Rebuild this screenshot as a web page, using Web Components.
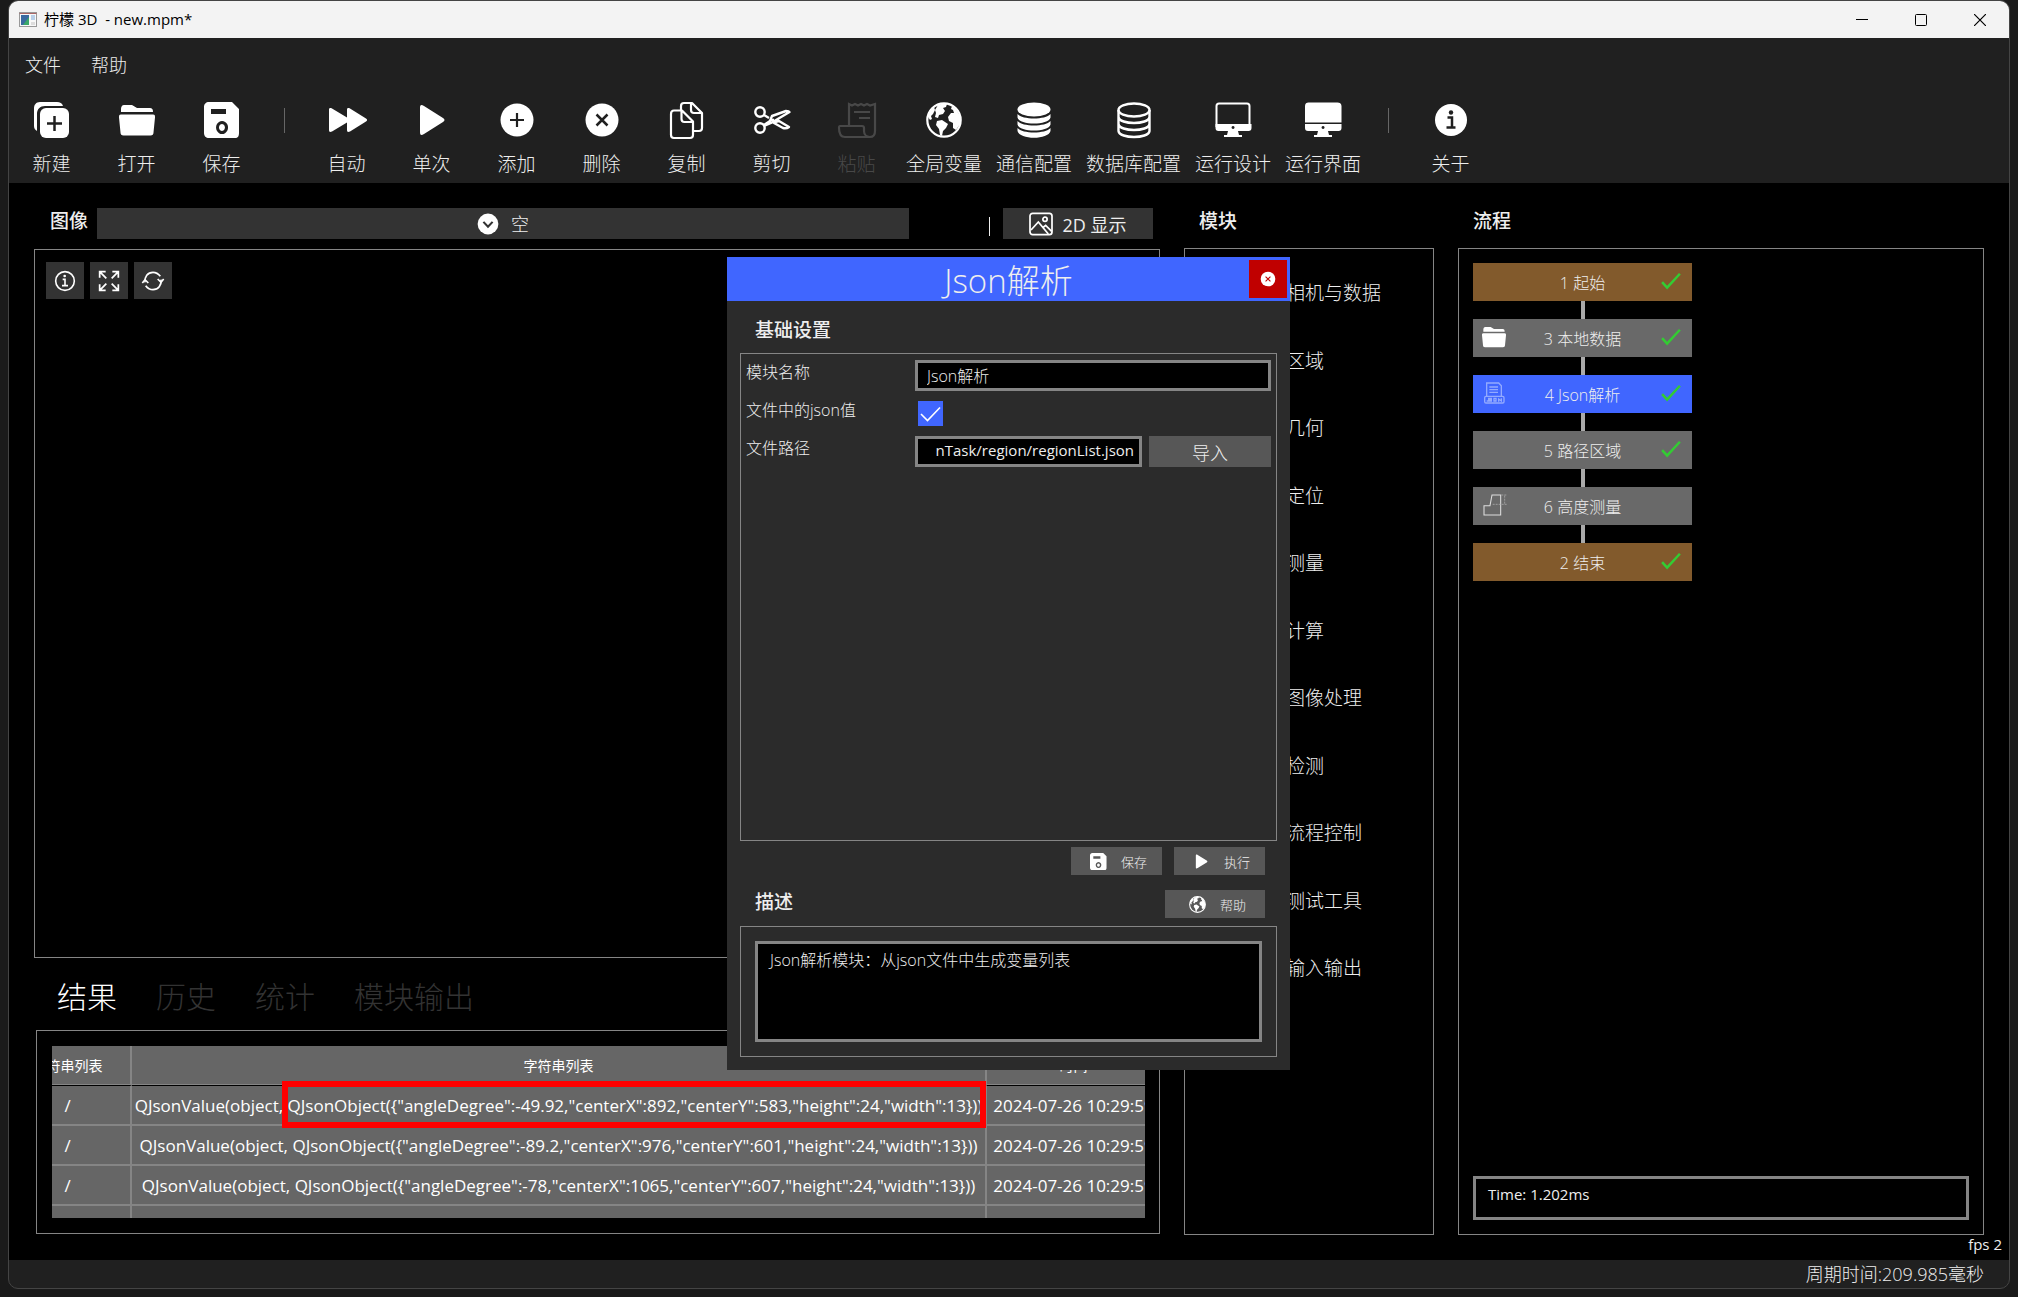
<!DOCTYPE html>
<html lang="zh-CN">
<head>
	<meta charset="utf-8">
	<meta name="viewport" content="width=device-width, initial-scale=1">
	<title>柠檬 3D - new.mpm*</title>
	<style>
		html, body {
			height: 100%;
		}
		body {
			box-sizing: border-box;
			margin: 0;
			padding: 0 8px 8px 8px;
			background-color: #1a1a1a;
			color: #eee;
			font-family: "Open Sans", "Noto Sans CJK SC", sans-serif;
			font-size: 16px;
			font-weight: 300;
			--line: #858585;
			--blue: #4066ff;
			--btn: #575757;
			--dark: #333;
		}
	</style>
</head>
<body>
	<lemon-window>
		<title-bar slot="title">柠檬 3D&nbsp; - new.mpm*</title-bar>
		<menu-bar slot="header"></menu-bar>
		<tool-bar slot="header">
			<tool-button icon="create">新建</tool-button>
			<tool-button icon="folder">打开</tool-button>
			<tool-button icon="save">保存</tool-button>
			<tool-sep></tool-sep>
			<tool-button icon="forward">自动</tool-button>
			<tool-button icon="play">单次</tool-button>
			<tool-button icon="plus">添加</tool-button>
			<tool-button icon="remove">删除</tool-button>
			<tool-button icon="copy">复制</tool-button>
			<tool-button icon="cut">剪切</tool-button>
			<tool-button icon="paste" disabled>粘贴</tool-button>
			<tool-button icon="globe">全局变量</tool-button>
			<tool-button icon="stack">通信配置</tool-button>
			<tool-button icon="database">数据库配置</tool-button>
			<tool-button icon="monitor">运行设计</tool-button>
			<tool-button icon="screen">运行界面</tool-button>
			<tool-sep></tool-sep>
			<tool-button icon="info">关于</tool-button>
		</tool-bar>
		<work-space slot="main">
			<image-view slot="left"></image-view>
			<result-view slot="left"></result-view>
			<module-list slot="middle"></module-list>
			<flow-view slot="right"></flow-view>
			<module-dialog slot="dialog"></module-dialog>
		</work-space>
		<status-bar slot="status">周期时间:209.985毫秒</status-bar>
	</lemon-window>

	<template id="lemonWindow">
		<style>
			:host {
				display: flex;
				flex-direction: column;
				box-sizing: border-box;
				min-height: 100%;
				border: 1px solid #444;
				border-radius: 10px;
				overflow: hidden;
				background-color: #202020;
			}
			main {
				display: flex;
				flex: 1;
			}
		</style>
		<slot name="title"></slot>
		<header><slot name="header"></slot></header>
		<main><slot name="main"></slot></main>
		<slot name="status"></slot>
	</template>

	<template id="titleBar">
		<style>
			:host {
				display: flex;
				align-items: center;
				height: 37px;
				padding-left: 10px;
				background-color: #f3f3f3;
				color: #000;
				font-size: 15px;
				font-weight: 400;
			}
			.logo {
				width: 18px;
				height: 15px;
				margin-right: 7px;
			}
			.name {
				flex: 1;
				padding-bottom: 3px;
			}
			button {
				width: 59px;
				height: 37px;
				padding: 0;
				border: 0;
				background: none;
			}
			button svg {
				display: block;
				margin: auto;
			}
		</style>
		<svg class="logo" viewBox="0 0 18 15">
			<rect x="0.5" y="0.5" width="17" height="14" fill="#f8f8f8" stroke="#999"/>
			<path d="M0.5 1.5h17" stroke="#a66" />
			<rect x="2" y="3" width="8" height="10" fill="#3a6aa0"/>
			<path d="M4 13 10 5v8z" fill="#3aa86a"/>
			<rect x="12" y="3" width="4" height="5" fill="#b8cfe8"/>
			<rect x="12" y="10" width="4" height="3" fill="#ddd"/>
		</svg>
		<span class="name"><slot></slot></span>
		<button aria-label="最小化"><svg width="12" height="12" viewBox="0 0 12 12"><path d="M0 5.5h12" stroke="#000"/></svg></button>
		<button aria-label="最大化"><svg width="12" height="12" viewBox="0 0 12 12"><rect x="0.5" y="0.5" width="11" height="11" rx="1" fill="none" stroke="#000"/></svg></button>
		<button aria-label="关闭"><svg width="12" height="12" viewBox="0 0 12 12"><path d="M0 0l12 12M12 0L0 12" stroke="#000" stroke-width="1.2"/></svg></button>
	</template>

	<template id="menuBar">
		<style>
			:host {
				display: block;
				padding: 13px 8px 0;
			}
			nav {
				display: flex;
				gap: 14px;
			}
			button {
				padding: 0 8px;
				border: 0;
				background: none;
				color: #eee;
				font: inherit;
				font-size: 18px;
				line-height: 28px;
			}
		</style>
		<nav>
			<button>文件</button>
			<button>帮助</button>
		</nav>
	</template>

	<template id="toolBar">
		<style>
			:host {
				display: flex;
				height: 104px;
			}
		</style>
		<slot></slot>
	</template>

	<template id="toolButton">
		<style>
			:host {
				display: block;
			}
			button {
				display: flex;
				flex-direction: column;
				align-items: center;
				gap: 12px;
				min-width: 85px;
				padding: 23px 7px 0;
				border: 0;
				background: none;
				color: #eee;
				font: inherit;
				font-size: 19px;
				line-height: 28px;
				white-space: nowrap;
			}
			ui-icon {
				width: 36px;
				height: 36px;
			}
			:host([disabled]) button {
				color: #484848;
			}
		</style>
		<button><ui-icon></ui-icon><span><slot></slot></span></button>
	</template>

	<template id="toolSep">
		<style>
			:host {
				width: 1px;
				height: 25px;
				margin: 29px 19px 0 20px;
				background-color: #666;
			}
		</style>
	</template>

	<template id="workSpace">
		<style>
			:host {
				position: relative;
				display: grid;
				grid-template-columns: 1126fr 250fr 526fr;
				gap: 24px;
				flex: 1;
				padding: 25px 25px 25px 25px;
				background-color: #000;
			}
			section {
				display: flex;
				flex-direction: column;
				min-width: 0;
			}
			.dialog {
				position: absolute;
				top: 74px;
				left: 718px;
				width: 563px;
				height: 813px;
			}
			.fps {
				position: absolute;
				right: 7px;
				bottom: 4px;
				font-weight: 400;
				font-size: 15px;
				line-height: 24px;
			}
		</style>
		<section><slot name="left"></slot></section>
		<section><slot name="middle"></slot></section>
		<section><slot name="right"></slot></section>
		<div class="dialog"><slot name="dialog"></slot></div>
		<div class="fps">fps 2</div>
	</template>

	<template id="imageView">
		<style>
			:host {
				display: flex;
				flex-direction: column;
				flex: 1;
			}
			.head {
				display: flex;
				height: 31px;
				margin-bottom: 10px;
			}
			h2 {
				margin: 0;
				padding: 0 9px 0 16px;
				font-size: 19px;
				font-weight: 500;
				line-height: 27px;
			}
			.source {
				display: flex;
				flex: 1;
				align-items: center;
				justify-content: center;
				gap: 12px;
				background-color: var(--dark);
			}
			.source ui-icon {
				width: 22px;
				height: 22px;
			}
			select {
				padding: 0;
				border: 0;
				appearance: none;
				background: none;
				color: #eee;
				font: inherit;
				font-size: 18px;
			}
			.bar {
				width: 1px;
				height: 19px;
				margin: 9px 13px 0 80px;
				background-color: #eee;
			}
			.mode {
				display: flex;
				align-items: center;
				justify-content: center;
				gap: 9px;
				width: 150px;
				margin-right: 7px;
				border: 0;
				background-color: var(--dark);
				color: #eee;
				font: inherit;
				font-size: 18px;
				font-weight: 400;
			}
			.mode ui-icon {
				width: 24px;
				height: 24px;
			}
			.view {
				display: flex;
				flex: 1;
				gap: 6px;
				padding: 12px 11px;
				border: 1px solid var(--line);
			}
			.view button {
				width: 38px;
				height: 37px;
				padding: 7px;
				border: 0;
				background-color: var(--dark);
				color: #eee;
			}
			.view ui-icon {
				width: 24px;
				height: 24px;
			}
		</style>
		<div class="head">
			<h2>图像</h2>
			<label class="source"><ui-icon name="chevron"></ui-icon><select aria-label="图像"><option>空</option></select></label>
			<span class="bar"></span>
			<button class="mode"><ui-icon name="picture"></ui-icon>2D 显示</button>
		</div>
		<div class="view">
			<button aria-label="信息"><ui-icon name="infoLine"></ui-icon></button>
			<button aria-label="适应窗口"><ui-icon name="expand"></ui-icon></button>
			<button aria-label="刷新"><ui-icon name="refresh"></ui-icon></button>
		</div>
	</template>

	<template id="resultView">
		<style>
			:host {
				display: block;
			}
			nav {
				display: flex;
				gap: 39px;
				height: 66px;
				padding: 6px 0 0 23px;
				align-items: center;
			}
			nav button {
				padding: 0;
				border: 0;
				background: none;
				color: #333;
				font: inherit;
				font-size: 30px;
				line-height: 44px;
			}
			nav .active {
				color: #fff;
			}
			.panel {
				position: relative;
				margin: 0 0 1px 2px;
				padding: 15px 14px 15px 15px;
				border: 1px solid var(--line);
			}
			.scroll {
				height: 172px;
				overflow: hidden;
			}
			/* scrolled right by the part of the first column that is out of view */
			table {
				width: 1155px;
				margin-left: -47px;
				border-spacing: 0;
				table-layout: fixed;
				background-color: #666;
				color: #fff;
				font-weight: 400;
			}
			th {
				height: 38px;
				padding: 0;
				border-right: 2px solid var(--line);
				border-bottom: 1px solid var(--line);
				font-size: 14px;
				font-weight: 400;
			}
			td {
				height: 38px;
				padding: 0;
				border-right: 2px solid var(--line);
				border-bottom: 2px solid var(--line);
				font-size: 17px;
				text-align: center;
				white-space: nowrap;
			}
			tbody tr:first-child td {
				border-top: 1px solid #000;
			}
			th:last-child, td:last-child {
				border-right: 0;
			}
			.mark {
				position: absolute;
				top: 50px;
				right: 173px;
				width: 692px;
				height: 35px;
				border: 6px solid #f00;
			}
		</style>
		<nav>
			<button class="active">结果</button>
			<button>历史</button>
			<button>统计</button>
			<button>模块输出</button>
		</nav>
		<div class="panel">
			<div class="scroll">
				<table>
					<colgroup><col style="width: 127px"><col style="width: 855px"><col></colgroup>
					<thead>
						<tr><th>字符串列表</th><th>字符串列表</th><th>时间</th></tr>
					</thead>
					<tbody></tbody>
				</table>
			</div>
			<div class="mark"></div>
		</div>
	</template>

	<template id="moduleList">
		<style>
			:host {
				display: flex;
				flex-direction: column;
				flex: 1;
			}
			h2 {
				margin: 0 0 13px;
				padding-left: 15px;
				font-size: 19px;
				font-weight: 500;
				line-height: 27px;
			}
			ul {
				flex: 1;
				margin: 0;
				padding: 11px 0 0 101px;
				border: 1px solid var(--line);
				list-style: none;
			}
			li {
				font-size: 19px;
				line-height: 67px;
				white-space: nowrap;
			}
			li:nth-child(even) {
				line-height: 68px;
			}
		</style>
		<h2>模块</h2>
		<ul></ul>
	</template>

	<template id="flowView">
		<style>
			:host {
				display: flex;
				flex-direction: column;
				flex: 1;
			}
			h2 {
				margin: 0 0 13px;
				padding-left: 15px;
				font-size: 19px;
				font-weight: 500;
				line-height: 27px;
			}
			.panel {
				display: flex;
				flex: 1;
				flex-direction: column;
				justify-content: space-between;
				padding: 14px;
				border: 1px solid var(--line);
			}
			.nodes {
				width: 219px;
			}
			output {
				box-sizing: border-box;
				height: 44px;
				padding: 4px 12px;
				border: 3px solid var(--line);
				font-size: 15px;
				font-weight: 400;
				line-height: 22px;
			}
		</style>
		<h2>流程</h2>
		<div class="panel">
			<div class="nodes">
				<flow-node kind="end" done first>1 起始</flow-node>
				<flow-node icon="folder" done>3 本地数据</flow-node>
				<flow-node icon="json" kind="active" done>4 Json解析</flow-node>
				<flow-node done>5 路径区域</flow-node>
				<flow-node icon="height">6 高度测量</flow-node>
				<flow-node kind="end" done>2 结束</flow-node>
			</div>
			<output>Time: 1.202ms</output>
		</div>
	</template>

	<template id="flowNode">
		<style>
			:host {
				display: block;
			}
			.link {
				width: 4px;
				height: 18px;
				margin: 0 auto;
				background-color: #aaa;
			}
			:host([first]) .link {
				display: none;
			}
			.node {
				display: grid;
				grid-template-columns: 30px 1fr 30px;
				align-items: center;
				height: 38px;
				padding: 0 7px;
				background-color: #696969;
				font-size: 16px;
				text-align: center;
			}
			:host([kind="end"]) .node {
				background-color: #825a2c;
			}
			:host([kind="active"]) .node {
				background-color: var(--blue);
			}
			ui-icon {
				width: 24px;
				height: 24px;
				margin: 0 0 3px 2px;
			}
			.check {
				width: 20px;
				height: 20px;
				margin-left: 6px;
				color: #3c3;
			}
		</style>
		<div class="link"></div>
		<div class="node">
			<ui-icon class="icon"></ui-icon>
			<span><slot></slot></span>
			<ui-icon class="check"></ui-icon>
		</div>
	</template>

	<template id="moduleDialog">
		<style>
			:host {
				display: flex;
				flex-direction: column;
				box-sizing: border-box;
				height: 100%;
				background-color: #2b2b2b;
			}
			header {
				display: grid;
				grid-template-columns: 38px 1fr 38px;
				height: 38px;
				padding: 3px;
				background-color: var(--blue);
			}
			h1 {
				grid-column: 2;
				margin: 0;
				font-size: 33px;
				font-weight: 300;
				line-height: 41px;
				text-align: center;
			}
			button {
				padding: 0;
				border: 0;
				background-color: var(--btn);
				color: #eee;
				font: inherit;
			}
			.close {
				height: 38px;
				background-color: #c00000;
			}
			.close ui-icon {
				width: 16px;
				height: 16px;
				margin: auto;
			}
			h2 {
				margin: 0;
				padding-left: 15px;
				font-size: 19px;
				font-weight: 500;
				line-height: 28px;
			}
			.body {
				display: flex;
				flex: 1;
				flex-direction: column;
				padding: 15px 13px 13px;
			}
			form {
				display: grid;
				grid-template-columns: 169px 1fr 122px;
				grid-auto-rows: 31px;
				flex: 1;
				align-content: start;
				gap: 7px;
				margin-top: 9px;
				padding: 6px 5px;
				border: 1px solid var(--line);
			}
			form label {
				line-height: 24px;
				white-space: nowrap;
			}
			.wide {
				grid-column: 2 / 4;
			}
			input[type="text"], textarea {
				box-sizing: border-box;
				min-width: 0;
				margin: 0 0 0 -7px;
				padding: 0 9px 2px;
				border: 3px solid var(--line);
				background-color: #000;
				color: #eee;
				font: inherit;
			}
			input.path {
				padding: 0 5px 4px;
				font-weight: 400;
				font-size: 15px;
				text-align: right;
			}
			input[type="checkbox"] {
				appearance: none;
				width: 25px;
				height: 25px;
				margin: 3px 0 0 -4px;
				background: var(--blue) url("data:image/svg+xml,%3Csvg xmlns='http://www.w3.org/2000/svg' viewBox='0 0 25 25'%3E%3Cpath d='M3 13l6.500 6.500L22 6.500' fill='none' stroke='%23fff' stroke-width='1.600'/%3E%3C/svg%3E");
			}
			.import {
				font-size: 18px;
			}
			.actions {
				display: flex;
				justify-content: flex-end;
				gap: 12px;
				padding: 6px 12px 15px;
			}
			.small {
				display: flex;
				align-items: center;
				gap: 14px;
				height: 28px;
				padding: 0 15px 0 19px;
				font-size: 13px;
			}
			.small ui-icon {
				width: 17px;
				height: 17px;
			}
			.about {
				display: flex;
				justify-content: space-between;
				padding-right: 12px;
			}
			.about h2 {
				line-height: 24px;
			}
			.help {
				padding: 0 19px 0 24px;
			}
			.desc {
				display: flex;
				margin-top: 8px;
				padding: 14px;
				border: 1px solid var(--line);
			}
			.desc textarea {
				flex: 1;
				height: 101px;
				margin: 0;
				padding: 4px 12px;
				line-height: 24px;
				resize: none;
			}
		</style>
		<header>
			<h1>Json解析</h1>
			<button class="close" aria-label="关闭"><ui-icon name="remove"></ui-icon></button>
		</header>
		<div class="body">
			<h2>基础设置</h2>
			<form>
				<label for="name">模块名称</label>
				<input class="wide" type="text" id="name" value="Json解析">
				<label for="inFile">文件中的json值</label>
				<input class="wide" type="checkbox" id="inFile" checked>
				<label for="path">文件路径</label>
				<input class="path" type="text" id="path" value="nTask/region/regionList.json">
				<button class="import" type="button">导入</button>
			</form>
			<div class="actions">
				<button class="small"><ui-icon name="save"></ui-icon>保存</button>
				<button class="small"><ui-icon name="play"></ui-icon>执行</button>
			</div>
			<div class="about">
				<h2>描述</h2>
				<button class="small help"><ui-icon name="globe"></ui-icon>帮助</button>
			</div>
			<div class="desc">
				<textarea aria-label="描述">Json解析模块：从json文件中生成变量列表</textarea>
			</div>
		</div>
	</template>

	<template id="statusBar">
		<style>
			:host {
				display: block;
				padding-right: 25px;
				font-size: 18px;
				line-height: 28px;
				text-align: right;
			}
		</style>
		<slot></slot>
	</template>

	<script>
		// all icons share a 36 x 36 box
		const ICONS = {
			create: `<path d="M3 29c-2-1-3-3-3-5V6c0-3 2-6 6-6h17c3 0 5 1 6 4H11c-5 0-8 3-8 8z" fill="currentColor"/>
				<rect x="6" y="6" width="29" height="30" rx="6" fill="currentColor"/><path d="M20.500 14v15M13 21.500h15" stroke="#202020" stroke-width="2.500"/>`,
			folder: `<path d="M2 10V7c0-2 1-4 3-4h8l5 3h13c2 0 3 1 3 4z" fill="currentColor"/>
				<path d="M2 12.500h32c2 0 2 1 2 3l-1.500 15c0 2-1 3-3 3h-27c-2 0-3-1-3-3L0 15.500c0-2 0-3 2-3z" fill="currentColor"/>`,
			save: `<path fill-rule="evenodd" d="M5 0h23l7 7v24c0 3-1 5-4 5H5c-3 0-5-2-5-5V5c0-3 2-5 5-5zM7 7v5h15V7zM18 19a6 6.500 0 1 0 0.100 0zM18 22a3 3.500 0 1 1-0.100 0z" fill="currentColor"/>`,
			forward: `<path d="M0 8c0-2 1-2.500 3-1.500l15 9V8c0-2 1-2.500 3-1.500l16 10c1.500 1 1.500 2 0 3L21 29.500c-2 1-3 .5-3-1.500v-7.500l-15 9c-2 1-3 .5-3-1.500z" fill="currentColor"/>`,
			play: `<path d="M6 6c0-3 1-4 4-2l19 12c2 1.500 2 2.500 0 4L10 32c-3 2-4 1-4-2z" fill="currentColor"/>`,
			plus: `<circle cx="18" cy="18" r="16.500" fill="currentColor"/><path d="M18 11v14M11 18h14" stroke="#202020" stroke-width="2.200"/>`,
			remove: `<circle cx="18" cy="18" r="16.500" fill="currentColor"/><path d="M12.500 12.500l11 11M23.500 12.500l-11 11" stroke="var(--cross, #202020)" stroke-width="2.500"/>`,
			copy: `<g fill="none" stroke="currentColor" stroke-width="2.200" stroke-linejoin="round"><path d="M12 8V4c0-2 1-3 3-3h8l10 10v15c0 2-1 3-3 3h-5M22 1v7c0 2 1 3 3 3h8"/>
				<path d="M5 8.500h8l11 11V33c0 2-1 3-3 3H5c-2 0-3-1-3-3V12c0-2 1-3.500 3-3.500zM12.500 9v8c0 2 1 3 3 3h8"/></g>`,
			cut: `<g fill="none" stroke="currentColor" stroke-width="2.400"><circle cx="6" cy="10" r="4.700"/><circle cx="6" cy="26" r="4.700"/>
				<path d="M10 13l5 3M10 23l6-4 2-5 14-5c2 0 3 0 3.500 1L17 21l-7 3M21 20l4-1 10 6c-2 1.500-4 1.500-6 1l-9-5z" stroke-linejoin="round"/><path d="M17 18h3"/></g>`,
			paste: `<g fill="none" stroke="currentColor" stroke-width="2.200"><path d="M10 24V2l3 1.500L16 2l3 1.500L22 2l3 1.500L28 2l3 1.500L36 2v27c0 4-2 6-5 6s-6-2-6-6v-3c0-1-1-2-2-2H1c-1 0-1 1-1 2 0 6 2 9 6 9h25M15 10h16M20 16h11"/></g>`,
			globe: `<circle cx="18" cy="18" r="16.700" fill="none" stroke="currentColor" stroke-width="2.200"/>
				<path d="M1.500 14C3 10 5 7 8 5l1 3-2 4-2 2 1 3-2 1zM12 3l5-1.500 4 .5-1 3-3 1 2 3-2 3-4 1-1 3-3-1 1-4-1-3zM11 19l5-1 3 2 3 2-2 4-3 3-1 5-2-1-1-6-3-4zM26 4l4 3 4 7v8l-4 6-3-2v-5l-4-2-1-4 3-4h3l-1-3-2-1z" fill="currentColor"/>`,
			stack: `<g fill="currentColor"><ellipse cx="18" cy="7.500" rx="16.500" ry="7"/><path d="M1.500 12c5 6 28 6 33 0v3.500c-2 8-31 8-33 0zM1.500 19c5 6 28 6 33 0v3.500c-2 8-31 8-33 0zM1.500 26c5 6 28 6 33 0v3c-2 9-31 9-33 0z"/></g>`,
			database: `<g fill="none" stroke="currentColor" stroke-width="2.400"><ellipse cx="18" cy="8" rx="15.500" ry="6.500"/><path d="M2.500 8v21c1 8 30 8 31 0V8M2.500 15c1 8 30 8 31 0M2.500 22c1 8 30 8 31 0"/></g>`,
			monitor: `<path d="M1.500 25V4c0-1.500 1-2.500 2.500-2.500h28c1.500 0 2.500 1 2.500 2.500v21" fill="none" stroke="currentColor" stroke-width="2"/>
				<path fill-rule="evenodd" d="M.5 22h36v4c0 2-1 3-3 3H23l1 4h3v2H9v-2h3l1-4H3.500c-2 0-3-1-3-3zM18 24a1.500 1.500 0 1 0 .1 0z" fill="currentColor"/>`,
			screen: `<path d="M3.500.5h29c2 0 4 1 4 3.500v16.500H0V4C0 1.500 1.500.5 3.500.5z" fill="currentColor"/>
				<path fill-rule="evenodd" d="M0 22h36.500v4c0 2-1 3-3 3H23l1 4h3v2H9v-2h3l1-4H3c-2 0-3-1-3-3zM18 24a1.500 1.500 0 1 0 .1 0z" fill="currentColor"/>`,
			info: `<circle cx="18" cy="18" r="16" fill="currentColor"/><circle cx="18" cy="10.500" r="2.200" fill="#202020"/><path d="M14.500 15.500h4.500v10M13.500 25.500h9" fill="none" stroke="#202020" stroke-width="2.500"/>`,
			chevron: `<circle cx="18" cy="18" r="17" fill="currentColor"/><path d="M10.500 14.500l7.500 8 7.500-8" fill="none" stroke="#333" stroke-width="3.500"/>`,
			picture: `<g fill="none" stroke="currentColor" stroke-width="2.600"><rect x="1.500" y="2" width="33" height="32" rx="4"/><circle cx="24" cy="11" r="3.200"/><path d="M3 27l11-12 15 18M20 24l5-4 9 9"/></g>`,
			infoLine: `<g fill="none" stroke="currentColor" stroke-width="2.400"><circle cx="18" cy="18" r="14"/><path d="M14.500 15.500H18v9M13.500 25h9"/></g><circle cx="17.500" cy="10.500" r="2" fill="currentColor"/>`,
			expand: `<path d="M4 13V4h9M4 4l10 10M23 4h9v9M32 4L22 14M4 23v9h9M4 32l10-10M23 32h9v-9M32 32L22 22" fill="none" stroke="currentColor" stroke-width="2.600"/>`,
			refresh: `<g fill="none" stroke="currentColor" stroke-width="2.500"><path d="M6 20C5 12 10 5 18 5c5 0 8 2 11 6M30 16c1 8-4 15-12 15-5 0-8-2-11-6"/><path d="M2 21l4-5 5 5M34 15l-4 5-5-5"/></g>`,
			json: `<g fill="none" stroke="#93aaff" stroke-width="2"><path d="M7 23V3h18l4 4v16M11 9h13M11 13h13M11 17h13"/><rect x="4" y="23" width="29" height="10" rx="2"/><path d="M10 25v5H7M15 26h-3v2h2v2h-3M18 26h3v4h-3zM25 31v-4l4 3v-4"/></g>`,
			height: `<path d="M3 19h9L15 3h13v30H3z" fill="none" stroke="#ddd" stroke-width="1.600"/><path d="M29 3h8M16 17h21M34 4v12" fill="none" stroke="#aaa" stroke-width="1.200" stroke-dasharray="3 1.500"/>`,
			check: `<path d="M2 20l9 10L34 5" fill="none" stroke="currentColor" stroke-width="4.500"/>`
		};

		// base class: clones the template into an open shadow root
		class BaseElement extends HTMLElement {
			constructor() {
				super();
				this.attachShadow({ mode: 'open' });
				const tpl = document.getElementById(this.constructor.tpl);
				this.shadowRoot.append(tpl.content.cloneNode(true));
			}
			$(selector) {
				return this.shadowRoot.querySelector(selector);
			}
		}

		// ui-icon
		class UiIcon extends HTMLElement {
			static observedAttributes = ['name'];
			constructor() {
				super();
				this.attachShadow({ mode: 'open' });
			}
			attributeChangedCallback() {
				const shapes = ICONS[this.getAttribute('name')] || '';
				this.shadowRoot.innerHTML = `
					<style>
						:host { display: block; flex: none; color: #fff; }
						svg { display: block; width: 100%; height: 100%; overflow: visible; }
					</style>
					<svg viewBox="0 0 36 36" aria-hidden="true">${shapes}</svg>`;
			}
		}

		// tool-button
		class ToolButton extends BaseElement {
			static tpl = 'toolButton';
			connectedCallback() {
				const icon = this.$('ui-icon');
				icon.setAttribute('name', this.getAttribute('icon'));
				icon.style.color = this.hasAttribute('disabled') ? '#484848' : '#fff';
				this.$('button').disabled = this.hasAttribute('disabled');
			}
		}

		// flow-node
		class FlowNode extends BaseElement {
			static tpl = 'flowNode';
			connectedCallback() {
				this.$('.icon').setAttribute('name', this.getAttribute('icon') || 'none');
				this.$('.check').setAttribute('name', this.hasAttribute('done') ? 'check' : 'none');
			}
		}

		// result-view
		class ResultView extends BaseElement {
			static tpl = 'resultView';
			connectedCallback() {
				const rows = [
					['-49.92', 892, 583],
					['-89.2', 976, 601],
					['-78', 1065, 607]
				];
				const body = this.$('tbody');
				for (const [angle, x, y] of rows) {
					const tr = body.insertRow();
					tr.insertCell().textContent = '/';
					tr.insertCell().textContent = `QJsonValue(object, QJsonObject({"angleDegree":${angle},"centerX":${x},"centerY":${y},"height":24,"width":13}))`;
					tr.insertCell().textContent = '2024-07-26 10:29:59';
				}
				const last = body.insertRow();
				for (let i = 0; i < 3; i++) last.insertCell();
			}
		}

		// module-list
		class ModuleList extends BaseElement {
			static tpl = 'moduleList';
			connectedCallback() {
				const names = ['相机与数据', '区域', '几何', '定位', '测量', '计算', '图像处理', '检测', '流程控制', '测试工具', '输入输出'];
				this.$('ul').innerHTML = names.map((name) => `<li>${name}</li>`).join('');
			}
		}

		// module-dialog
		class ModuleDialog extends BaseElement {
			static tpl = 'moduleDialog';
			connectedCallback() {
				this.$('.close').style.setProperty('--cross', '#c00000');
			}
		}

		customElements.define('ui-icon', UiIcon);
		customElements.define('lemon-window', class extends BaseElement { static tpl = 'lemonWindow'; });
		customElements.define('title-bar', class extends BaseElement { static tpl = 'titleBar'; });
		customElements.define('menu-bar', class extends BaseElement { static tpl = 'menuBar'; });
		customElements.define('tool-bar', class extends BaseElement { static tpl = 'toolBar'; });
		customElements.define('tool-button', ToolButton);
		customElements.define('tool-sep', class extends BaseElement { static tpl = 'toolSep'; });
		customElements.define('work-space', class extends BaseElement { static tpl = 'workSpace'; });
		customElements.define('image-view', class extends BaseElement { static tpl = 'imageView'; });
		customElements.define('result-view', ResultView);
		customElements.define('module-list', ModuleList);
		customElements.define('flow-node', FlowNode);
		customElements.define('flow-view', class extends BaseElement { static tpl = 'flowView'; });
		customElements.define('module-dialog', ModuleDialog);
		customElements.define('status-bar', class extends BaseElement { static tpl = 'statusBar'; });
	</script>
</body>
</html>
